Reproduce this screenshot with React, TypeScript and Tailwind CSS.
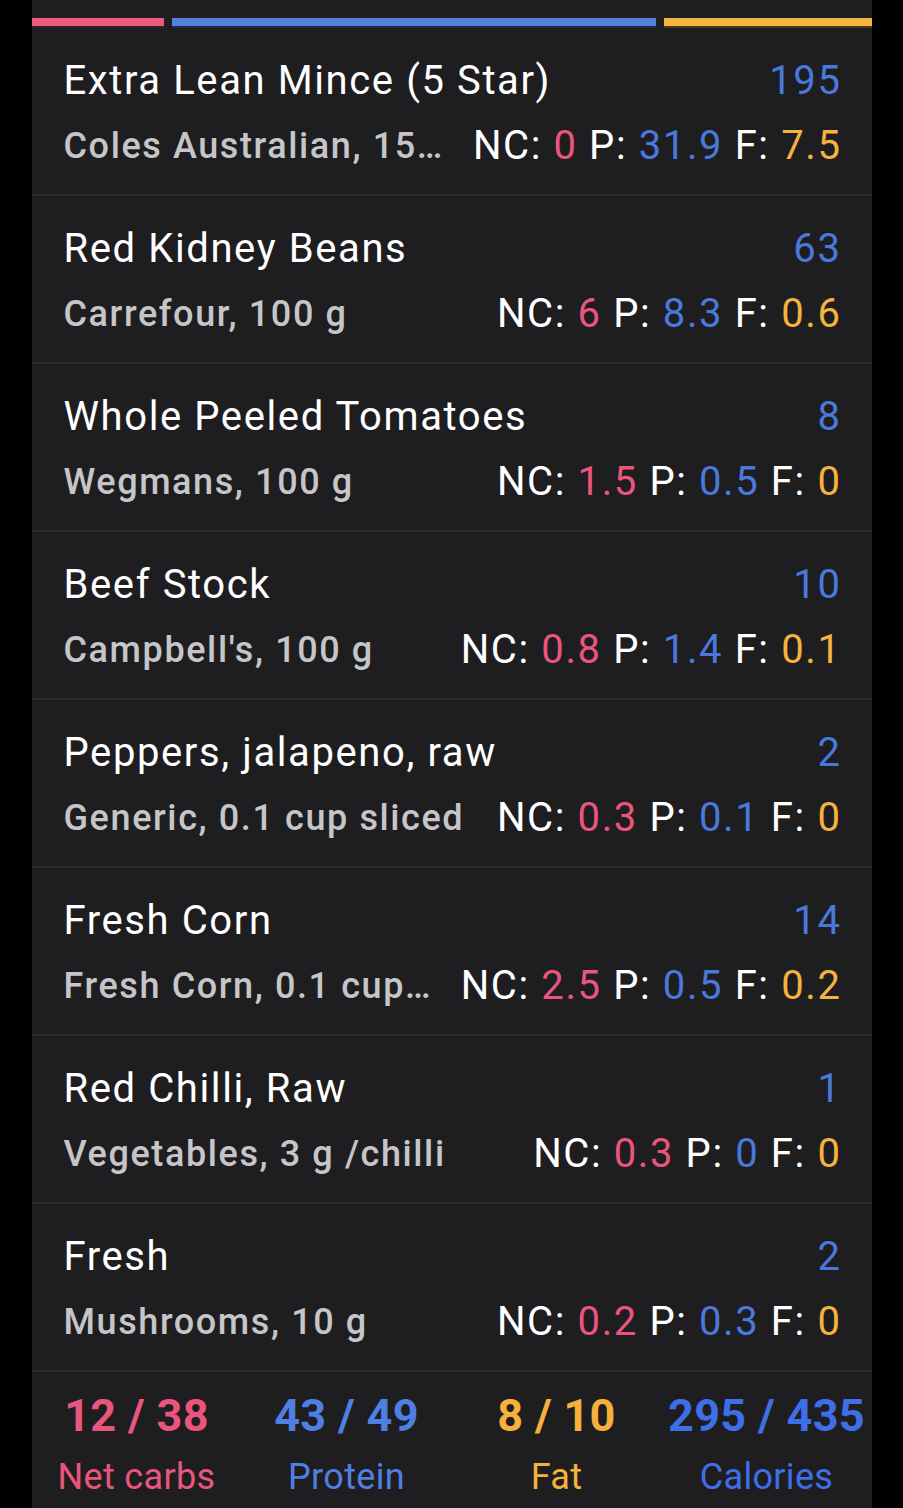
import React from 'react';

interface FoodItem {
  name: string;
  detail: string;
  kcal: number;
  nc: string;
  p: string;
  f: string;
}

const foods: FoodItem[] = [
  { name: 'Extra Lean Mince (5 Star)', detail: 'Coles Australian, 150 g', kcal: 195, nc: '0', p: '31.9', f: '7.5' },
  { name: 'Red Kidney Beans', detail: 'Carrefour, 100 g', kcal: 63, nc: '6', p: '8.3', f: '0.6' },
  { name: 'Whole Peeled Tomatoes', detail: 'Wegmans, 100 g', kcal: 8, nc: '1.5', p: '0.5', f: '0' },
  { name: 'Beef Stock', detail: "Campbell's, 100 g", kcal: 10, nc: '0.8', p: '1.4', f: '0.1' },
  { name: 'Peppers, jalapeno, raw', detail: 'Generic, 0.1 cup sliced', kcal: 2, nc: '0.3', p: '0.1', f: '0' },
  { name: 'Fresh Corn', detail: 'Fresh Corn, 0.1 cup kernels', kcal: 14, nc: '2.5', p: '0.5', f: '0.2' },
  { name: 'Red Chilli, Raw', detail: 'Vegetables, 3 g /chilli', kcal: 1, nc: '0.3', p: '0', f: '0' },
  { name: 'Fresh', detail: 'Mushrooms, 10 g', kcal: 2, nc: '0.2', p: '0.3', f: '0' },
];

const totals = [
  { value: '12 / 38', label: 'Net carbs', color: 'text-[#e9557c]' },
  { value: '43 / 49', label: 'Protein', color: 'text-[#4f7fe2]' },
  { value: '8 / 10', label: 'Fat', color: 'text-[#f5b13c]' },
  { value: '295 / 435', label: 'Calories', color: 'text-[#3e6fe8]' },
];

const FoodRow: React.FC<{ item: FoodItem }> = ({ item }) => (
  <div className="pl-8 pr-[30px] pt-5 pb-[18px] border-b-2 border-[#2b2b2d]">
    {/* 名称和卡路里 */}
    <div className="flex items-center justify-between h-16 text-[40px] leading-[64px] tracking-[0.04em] pt-[2px]">
      <span className="text-white truncate">{item.name}</span>
      <span className="text-[#4a78dc] shrink-0 pl-4">{item.kcal}</span>
    </div>
    {/* 品牌和宏量营养素 */}
    <div className="flex items-center justify-between gap-7 h-16 text-[40px] leading-[64px] tracking-[0.04em] pt-[4px]">
      <span className="min-w-0 truncate font-medium text-[#c6c6c8] text-[36px]">
        {item.detail}
      </span>
      <span className="shrink-0 text-white whitespace-pre">
        NC: <span className="text-[#e9557c]">{item.nc}</span> P: <span className="text-[#4a78dc]">{item.p}</span> F:{' '}
        <span className="text-[#f4b23e]">{item.f}</span>
      </span>
    </div>
  </div>
);

export default function App() {
  return (
    <div className="min-h-[1508px] bg-black flex justify-center" style={{ fontFamily: 'Roboto, "Noto Sans", sans-serif' }}>
      <div className="w-[840px] bg-[#1e1e20] flex flex-col">
        {/* 顶部进度条 */}
        <div className="flex gap-2 pt-[18px] pb-[2px]">
          <div className="h-2 w-[132px] bg-[#ea5a7f] shadow-[0_2px_0_#3a1a24]" />
          <div className="h-2 flex-1 bg-[#5480e0] shadow-[0_2px_0_#1f2a44]" />
          <div className="h-2 w-[208px] bg-[#f6b443] shadow-[0_2px_0_#4a3a1c]" />
        </div>

        {foods.map((item, i) => (
          <FoodRow key={i} item={item} />
        ))}

        {/* 汇总 */}
        <div className="grid grid-cols-4 pt-[17px] tracking-[0.02em]">
          {totals.map((t) => (
            <div key={t.label} className={`flex flex-col items-center whitespace-nowrap ${t.color}`}>
              <span className="text-[45px] leading-[54px] font-bold">{t.value}</span>
              <span className="text-[36px] leading-[43px] mt-[13px]">{t.label}</span>
            </div>
          ))}
        </div>
      </div>
    </div>
  );
}
